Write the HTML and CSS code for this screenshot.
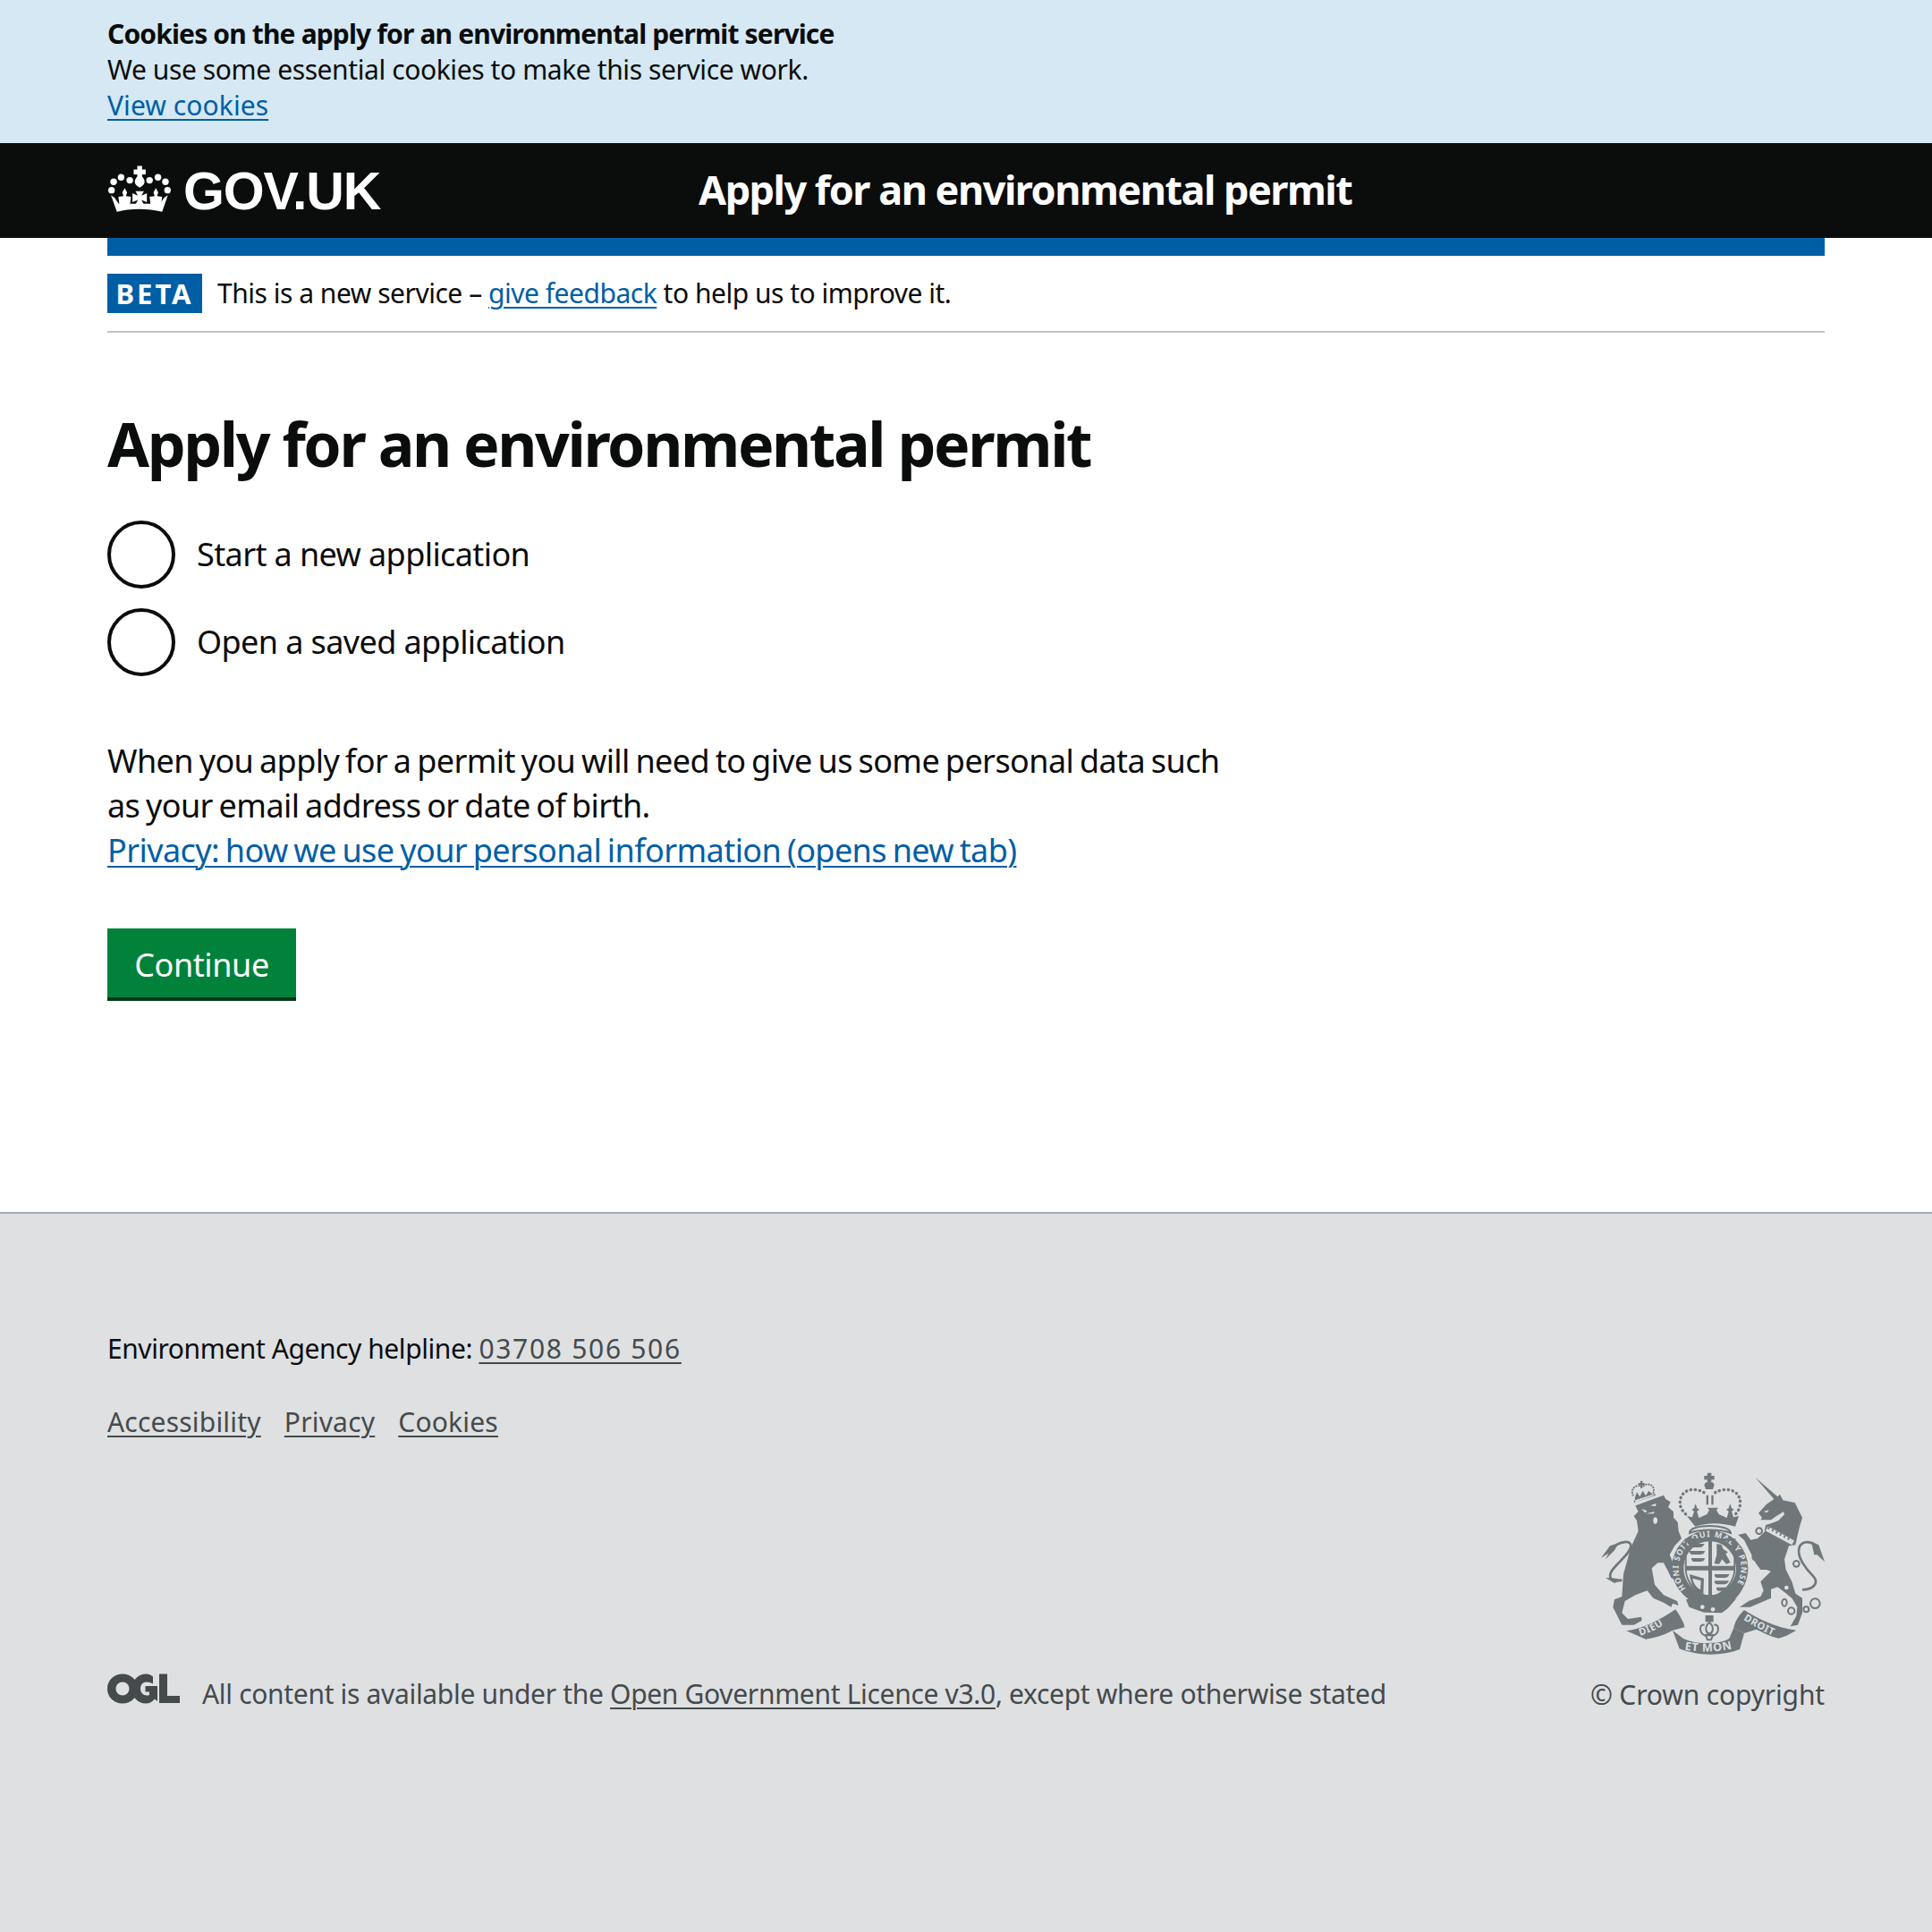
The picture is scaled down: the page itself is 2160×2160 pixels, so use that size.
FILE: index.html
```html
<!DOCTYPE html>
<html lang="en">
<head>
    <meta charset="UTF-8">
    <meta name="viewport" content="width=device-width, initial-scale=1.0">
    <title>Apply for an environmental permit</title>
    <link rel="stylesheet" href="styles.css">
</head>
<body>
    <div class="cookie-banner">
        <p class="cookie-title">Cookies on the apply for an environmental permit service</p>
        <p>We use some essential cookies to make this service work.</p>
        <p><a class="cookie-link" href="#">View cookies</a></p>
    </div>

    <header class="header">
        <a class="logo" href="#">
            <svg class="crown" viewBox="60 40 215 160" aria-hidden="true">
                <g fill="#fff">
                    <circle cx="81" cy="97" r="11"/><circle cx="106" cy="82" r="11"/><circle cx="135" cy="92" r="11"/>
                    <circle cx="201" cy="92" r="11"/><circle cx="229" cy="82" r="11"/><circle cx="254" cy="97" r="11"/>
                    <circle cx="74" cy="125" r="11"/><circle cx="261" cy="125" r="11"/>
                    <path d="M160 44h16v12h12v16h-12v7c7 8 9 15 8 21-1 6-8 12-16 16-8-4-15-10-16-16-1-6 1-13 8-21v-7h-12v-16h12z"/>
                    <path d="M92 197L72 142l12 8 14 20h138l14-20 12-8-19 55c-25-6-51-9-77-9s-52 3-74 9z"/>
                    <path d="M118 118l8 15-4 12 17 2-3 24h-36l-3-24 17-2-4-12z"/>
                    <path d="M222 118l8 15-4 12 17 2-3 24h-36l-3-24 17-2-4-12z"/>
                    <path d="M154 128h28l-8 15 18-8v30l-18-8 8 16h-28l8-16-18 8v-30l18 8z"/>
                </g>
            </svg>
            <span class="logo-text">GOV.UK</span>
        </a>
        <a class="service-name" href="#">Apply for an environmental permit</a>
    </header>

    <div class="width-container">
        <div class="blue-bar"></div>
        <div class="phase-banner">
            <strong class="phase-tag">BETA</strong>
            <span>This is a new service – <a href="#">give feedback</a> to help us to improve it.</span>
        </div>

        <main class="main">
            <h1>Apply for an environmental permit</h1>
            <div class="radios">
                <label class="radio"><span class="radio-mark"></span>Start a new application</label>
                <label class="radio"><span class="radio-mark"></span>Open a saved application</label>
            </div>
            <p class="body-text">When you apply for a permit you will need to give us some personal data such as your email address or date of birth.<br><a href="#">Privacy: how we use your personal information (opens new tab)</a></p>
            <button class="button" type="button">Continue</button>
        </main>
    </div>

    <footer class="footer">
        <div class="footer-inner">
            <p class="helpline">Environment Agency helpline: <a class="phone" href="#">03708 506 506</a></p>
            <ul class="footer-links">
                <li><a href="#">Accessibility</a></li>
                <li><a href="#">Privacy</a></li>
                <li><a href="#">Cookies</a></li>
            </ul>
            <div class="footer-bottom">
                <div class="licence">
                    <svg class="ogl" viewBox="0 0 82 34" aria-hidden="true">
                        <path fill="#454a4c" fill-rule="evenodd" d="M17 .5c9.500 0 17 7 17 16.500s-7.500 16.500-17 16.500S0 26.500 0 17 7.500.5 17 .5zm0 9c-4 0-7.500 3-7.500 7.500s3.500 7.500 7.500 7.500 7.500-3 7.500-7.500-3.500-7.500-7.500-7.500z"/>
                        <path fill="#454a4c" d="M51 3.500v8c-2.500-1.500-5-2.200-7.500-2-4 .3-6.500 3.200-6.500 7.500s3 7.500 7 7.500c1.200 0 2.200-.2 3-.6v-3.400h-4.500v-6.500H56V31l-3-2.500c-2.500 3-6 5-10 5-9 0-15.500-7-15.500-16.500S34.500.5 43.500.5c2.700 0 5.200 1 7.500 3z"/>
                        <path fill="#454a4c" d="M58 .5h9v24.500h14v8H58z"/>
                    </svg>
                    <span>All content is available under the <a href="#">Open Government Licence v3.0</a>, except where otherwise stated</span>
                </div>
                <div class="copyright">
                    <svg class="crest" viewBox="15 15 750 615" aria-hidden="true">
                        <defs>
                            <path id="garter-arc" d="M300 408A105 105 0 1 1 455 413"/>
                            <path id="dieu-arc" d="M146 566C180 556 215 538 250 512"/>
                            <path id="mon-arc" d="M295 613C340 622 420 622 475 604"/>
                            <path id="droit-arc" d="M492 512C530 535 570 558 618 576"/>
                        </defs>

                        <!-- lion -->
                        <path class="crest-dark" d="M130 130L225 95L232 108L248 118L240 135L258 150L258 170L272 185L275 215L285 240L262 265L245 295L262 335L278 365L272 385L250 372L240 350L225 322L205 322L185 340L195 395L225 430L270 450L275 465L255 458L250 470L225 455L190 440L170 415L130 430L95 450L85 490L105 510L150 503L152 515L125 530L85 530L70 500L55 470L60 445L85 435L90 360L115 270L140 215L135 180L125 165L140 150Z"/>
                        <path class="crest-line" stroke-width="8" d="M85 380C60 385 35 380 50 350C70 320 115 290 115 265C115 245 85 250 65 262"/>
                        <path class="crest-dark" d="M75 255L45 265L15 305L40 290L30 310L60 280ZM85 378L50 372L30 372L60 390Z"/>
                        <g class="crest-hole">
                            <path d="M150 140l20 8-8 6zM180 130l20-8-2 10zM165 157l30-7-4 7z"/>
                            <ellipse cx="197" cy="180" rx="7" ry="11"/>
                        </g>
                        <path class="crest-dark" d="M147 47h7v7h7v7h-7v10h-7v-10h-7v-7h7zM128 105l7-20 10 15 10-20 10 17 10-17 13 12 5 3-63 23zM125 120l73-25-2-5-71 23z"/>
                        <path class="crest-dots-small" d="M122 95C112 70 135 60 146 64M158 64C170 52 200 60 190 88"/>

                        <!-- crown over the shield -->
                        <g class="crest-dark">
                            <path d="M372 20h13v10h10v13h-10v6l-2 3h7l5 8-5 15h-24l-5-15 5-8h7l-2-3v-6h-10v-13h10z"/>
                            <path d="M368 95h7v32h-7zM385 95h7v32h-7z"/>
                            <path d="M303 165l18 4 6-20-8-6 8-4 5-16 5 16 8 4-8 6 6 22 27-12 8-14-6-8h36l-6 8 8 14 27 12 6-22-8-6 8-4 5-16 5 16 8 4-8 6 6 20 18-4-12 35c-45-14-95-14-134 0z"/>
                        </g>
                        <path class="crest-dots" d="M360 86C335 70 285 70 280 115C278 135 290 152 303 162M398 86C425 70 480 70 482 120C482 140 472 155 458 165"/>
                        <path class="crest-line" stroke-width="6" d="M312 222C310 190 448 190 450 222C420 208 340 208 312 222Z"/>

                        <!-- garter and shield -->
                        <path class="crest-dark" fill-rule="evenodd" d="M380 212A128 128 0 0 1 508 340C508 395 475 440 440 465L345 465C290 440 252 395 252 340A128 128 0 0 1 380 212ZM380 250C332 250 292 290 292 340C292 390 332 430 380 430C428 430 468 390 468 340C468 290 428 250 380 250Z"/>
                        <text class="crest-motto crest-garter"><textPath href="#garter-arc">HONI SOIT QUI MAL Y PENSE</textPath></text>
                        <path class="crest-dark" fill-rule="evenodd" d="M296 240H466V340C466 390 425 436 381 444C337 436 296 390 296 340ZM302 248V332H375V248ZM387 248V332H460V248ZM302 347C304 385 335 420 375 434V347ZM387 347V434C427 420 458 385 460 347Z"/>
                        <g class="crest-dark">
                            <path d="M312 258h50l-6 9-8 3h-30l-6-5zM312 282h52l-6 10-10 2h-30l-6-6zM318 306h46l-6 10-10 2h-24l-6-6z"/>
                            <path d="M403 258l16 3 6 15 16 10-8 6 16 28-14 6-14-16-10 16-16-2 8-30z"/>
                            <path d="M396 360h50l-6 9-8 3h-30l-6-5zM396 382h48l-6 9-8 3h-28l-6-5zM402 404h36l-6 9-8 3h-16l-6-5z"/>
                            <path fill-rule="evenodd" d="M312 360l48 14-2 52-10-2c-22-14-34-38-36-64zM322 374c2 14 10 28 26 38l2-30z"/>
                        </g>
                        <path class="crest-dark" d="M300 445L320 440C350 465 420 470 450 450L470 440L440 475L420 490L360 488L310 470Z"/>
                        <circle class="crest-hole" cx="355" cy="470" r="7"/>
                        <circle class="crest-hole" cx="390" cy="478" r="7"/>

                        <!-- unicorn -->
                        <g transform="translate(345 0)">
                            <path class="crest-dark" d="M187 35L262 100L270 92L280 112L320 120L345 170L335 205L330 225L322 262L300 265L285 310L290 345L310 385L322 425L345 440L345 490L330 530L305 535L325 500L328 470L310 440L285 420L262 403L240 410L240 440L205 455L170 470L135 470L165 450L205 435L215 415L205 385L240 350L225 345L205 345L190 325L170 285L150 245L130 228L155 222L172 245L195 240L218 218L222 195L240 190L265 180L285 160L282 150L258 165L240 178L205 178L210 170L198 155L225 125L250 108Z"/>
                            <path class="crest-collar" d="M226 207L314 254"/>
                            <path class="crest-collar-points" d="M230 204L310 247"/>
                            <path class="crest-line" stroke-width="8" d="M345 412C390 410 400 385 380 365C355 340 325 300 335 270C345 245 375 250 390 265"/>
                            <path class="crest-dark" d="M375 250L400 262L420 318L395 295L385 295Z"/>
                            <circle class="crest-hole" cx="315" cy="372" r="8"/>
                            <circle class="crest-hole" cx="292" cy="405" r="7"/>
                            <path class="crest-hole" d="M215 150l18-6-6 10z"/>
                            <g class="crest-ring">
                                <circle cx="200" cy="215" r="10"/><circle cx="190" cy="302" r="12"/>
                                <circle cx="325" cy="325" r="10"/><ellipse cx="285" cy="455" rx="8" ry="12"/>
                                <circle cx="308" cy="483" r="11"/><circle cx="358" cy="478" r="9"/>
                                <circle cx="388" cy="458" r="16"/>
                            </g>
                        </g>

                        <!-- motto ribbon -->
                        <g class="crest-dark">
                            <path d="M100 550C150 545 210 515 265 478C280 500 295 525 295 538L255 548C225 565 195 572 165 578Z"/>
                            <path d="M255 548L290 575C320 590 350 592 380 590C410 590 430 585 445 575L460 540L495 558L480 612C420 635 340 635 278 610Z"/>
                            <path d="M495 480C535 505 600 540 670 548C650 560 630 570 610 575C585 570 560 555 535 545L495 558L460 540C465 515 480 495 495 480Z"/>
                            <path d="M365 498h27v22h-27z"/>
                        </g>
                        <path class="crest-line" stroke-width="6" d="M378 522C395 535 392 555 378 560C365 555 362 535 378 522ZM362 530C345 525 342 555 362 565L378 560L394 565C414 555 411 525 394 530M366 565H390L384 580H372Z"/>
                        <text class="crest-motto"><textPath href="#dieu-arc">DIEU</textPath></text>
                        <text class="crest-motto crest-mon"><textPath href="#mon-arc">ET MON</textPath></text>
                        <text class="crest-motto"><textPath href="#droit-arc">DROIT</textPath></text>
                    </svg>
                    <span class="copyright-text">© Crown copyright</span>
                </div>
            </div>
        </div>
    </footer>
</body>
</html>
```
FILE: styles.css
```css
* {
    box-sizing: border-box;
}

body {
    font-family: "Noto Sans", Arial, sans-serif;
    color: #0b0c0c;
    background-color: #fff;
    margin: 0;
    padding: 0;
}

p {
    margin: 0;
}

a {
    color: #005ea5;
    text-decoration: underline;
    text-decoration-thickness: 2px;
    text-underline-offset: 4px;
}

.cookie-banner {
    background-color: #d5e8f3;
    height: 160px;
    padding: 18px 120px;
    font-size: 30px;
    line-height: 40px;
    letter-spacing: -0.4px;
}

.cookie-title {
    font-weight: 700;
    letter-spacing: -0.85px;
}

.cookie-link {
    letter-spacing: 0.08px;
}

.header {
    background-color: #0b0c0c;
    height: 106px;
    padding: 0 120px;
    display: flex;
    align-items: center;
}

.logo {
    display: flex;
    align-items: center;
    width: 661px;
    color: #fff;
    text-decoration: none;
}

.crown {
    width: 72px;
    height: 54px;
    margin-right: 13px;
    margin-bottom: 5px;
}

.logo-text {
    font-family: "Liberation Sans", Arial, sans-serif;
    font-size: 59px;
    font-weight: 700;
    letter-spacing: -1.2px;
    margin-top: 2px;
}

.service-name {
    color: #fff;
    font-size: 45px;
    line-height: 98px;
    font-weight: 700;
    letter-spacing: -1.5px;
    padding-bottom: 2px;
    text-decoration: none;
}

.width-container {
    padding: 0 120px;
}

.blue-bar {
    height: 20px;
    background-color: #005ea5;
}

.phase-banner {
    height: 86px;
    padding-top: 20px;
    border-bottom: 2px solid #bfc1c3;
    display: flex;
    align-items: flex-start;
    font-size: 30px;
    line-height: 44px;
    letter-spacing: -0.48px;
}

.phase-tag {
    background-color: #005ea5;
    color: #fff;
    width: 106px;
    height: 44px;
    margin-right: 17px;
    font-size: 31px;
    text-align: center;
    letter-spacing: 3px;
}

.main {
    height: 983px;
    padding-top: 79px;
}

h1 {
    font-size: 68px;
    line-height: 90px;
    letter-spacing: -2.4px;
    margin: 0 0 41px;
}

.radios {
    display: flex;
    flex-direction: column;
    gap: 22px;
    margin-bottom: 70px;
}

.radio {
    display: flex;
    align-items: center;
    font-size: 36px;
    line-height: 46px;
    letter-spacing: -0.6px;
}

.radio-mark {
    width: 76px;
    height: 76px;
    border: 4px solid #0b0c0c;
    border-radius: 50%;
    margin-right: 24px;
}

.body-text {
    width: 1280px;
    font-size: 36px;
    line-height: 50px;
    letter-spacing: -0.58px;
    word-spacing: -2.1px;
    margin-bottom: 62px;
}

.button {
    display: block;
    width: 211px;
    height: 81px;
    padding: 4px 0 0;
    border: none;
    border-bottom: 4px solid #003618;
    background-color: #00823b;
    color: #fff;
    font-family: inherit;
    font-size: 36px;
    letter-spacing: -0.4px;
    cursor: pointer;
}

.footer {
    background-color: #dee0e2;
    border-top: 2px solid #a1acb2;
    height: 805px;
    color: #454a4c;
}

.footer-inner {
    padding: 131px 120px 0;
    font-size: 30px;
    letter-spacing: -0.32px;
}

.footer a {
    color: #454a4c;
}

.helpline {
    color: #0b0c0c;
    line-height: 40px;
    letter-spacing: -0.43px;
}

.phone {
    letter-spacing: 1.7px;
}

.footer-links {
    list-style: none;
    display: flex;
    gap: 26px;
    margin: 42px 0 0;
    padding: 0;
    line-height: 40px;
    letter-spacing: 0.2px;
}

.footer-bottom {
    display: flex;
    justify-content: space-between;
    align-items: flex-end;
    margin-top: 35px;
}

.licence {
    display: flex;
    align-items: center;
    gap: 24px;
}

.ogl {
    width: 82px;
    height: 34px;
    margin-bottom: 10px;
}

.copyright {
    display: flex;
    flex-direction: column;
    align-items: flex-end;
    letter-spacing: -0.15px;
}

.crest {
    width: 250px;
    height: 205px;
    margin-bottom: 24px;
}

.crest-dark {
    fill: #6f777b;
}

.crest-hole {
    fill: #dee0e2;
}

.crest-line {
    fill: none;
    stroke: #6f777b;
}

.crest-dots {
    fill: none;
    stroke: #6f777b;
    stroke-width: 10;
    stroke-linecap: round;
    stroke-dasharray: 1 14;
}

.crest-dots-small {
    fill: none;
    stroke: #6f777b;
    stroke-width: 6;
    stroke-linecap: round;
    stroke-dasharray: 1 8;
}

.crest-collar {
    fill: none;
    stroke: #dee0e2;
    stroke-width: 17;
}

.crest-collar-points {
    fill: none;
    stroke: #6f777b;
    stroke-width: 8;
    stroke-dasharray: 6 9;
}

.crest-ring {
    fill: none;
    stroke: #6f777b;
    stroke-width: 6;
}

.crest-motto {
    font-family: "Noto Sans", Arial, sans-serif;
    font-size: 33px;
    font-weight: 700;
    letter-spacing: 2px;
    fill: #dee0e2;
}

.crest-garter {
    font-size: 27px;
    letter-spacing: 3px;
}

.crest-mon {
    font-size: 38px;
}
```
